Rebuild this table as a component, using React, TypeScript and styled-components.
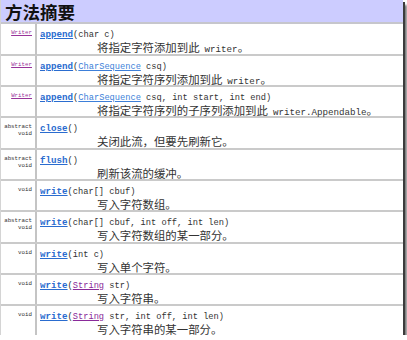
import styled, { createGlobalStyle } from "styled-components";

const GlobalStyle = createGlobalStyle`
  body {
    margin: 0;
    background: #ffffff;
  }
`;

type Part = { text: string; link?: "blue" | "purple" };

type Method = {
  type: string[];
  typeLink?: boolean;
  name: string;
  params: Part[];
  desc: string;
  code?: string;
  tail?: string;
  height: number;
};

const methods: Method[] = [
  { type: ["Writer"], typeLink: true, name: "append", params: [{ text: "(char c)" }], desc: "将指定字符添加到此", code: "writer", tail: "。", height: 32 },
  { type: ["Writer"], typeLink: true, name: "append", params: [{ text: "(" }, { text: "CharSequence", link: "blue" }, { text: " csq)" }], desc: "将指定字符序列添加到此", code: "writer", tail: "。", height: 31 },
  { type: ["Writer"], typeLink: true, name: "append", params: [{ text: "(" }, { text: "CharSequence", link: "blue" }, { text: " csq, int start, int end)" }], desc: "将指定字符序列的子序列添加到此", code: "writer.Appendable", tail: "。", height: 31 },
  { type: ["abstract", "void"], name: "close", params: [{ text: "()" }], desc: "关闭此流，但要先刷新它。", height: 32 },
  { type: ["abstract", "void"], name: "flush", params: [{ text: "()" }], desc: "刷新该流的缓冲。", height: 31 },
  { type: ["void"], name: "write", params: [{ text: "(char[] cbuf)" }], desc: "写入字符数组。", height: 31 },
  { type: ["abstract", "void"], name: "write", params: [{ text: "(char[] cbuf, int off, int len)" }], desc: "写入字符数组的某一部分。", height: 32 },
  { type: ["void"], name: "write", params: [{ text: "(int c)" }], desc: "写入单个字符。", height: 31 },
  { type: ["void"], name: "write", params: [{ text: "(" }, { text: "String", link: "purple" }, { text: " str)" }], desc: "写入字符串。", height: 31 },
  { type: ["void"], name: "write", params: [{ text: "(" }, { text: "String", link: "purple" }, { text: " str, int off, int len)" }], desc: "写入字符串的某一部分。", height: 32 },
];

const Frame = styled.div`
  width: 403px;
  height: 335px;
  overflow: hidden;
  background: #ffffff;
  border-left: 1px solid #d4d4d4;
  box-sizing: border-box;
  box-shadow: 2px 2px 0 #3c3c3c, 4px 5px 2px #7a7a7a;
`;

const Header = styled.div`
  height: 24px;
  box-sizing: border-box;
  background: #ccccff;
  border-bottom: 2px solid #c6c6cc;
  padding: 1px 0 0 4px;
  font-family: "Noto Sans CJK SC", sans-serif;
  font-weight: 700;
  font-size: 17.5px;
  line-height: 21px;
  color: #111111;
`;

const Row = styled.div<{ $h: number }>`
  display: grid;
  grid-template-columns: 36px 1fr;
  height: ${(p) => p.$h}px;
  box-sizing: border-box;
  border-bottom: 2px solid #cacaca;
`;

const TypeCell = styled.div`
  border-right: 2px solid #c4c4c4;
  padding: 5px 3px 0 0;
  text-align: right;
  font-family: "Liberation Mono", monospace;
  font-size: 5.8px;
  line-height: 7px;
  color: #333333;
`;

const TypeLink = styled.span`
  color: #993399;
  text-decoration: underline;
`;

const DetailCell = styled.div`
  padding: 4px 0 0 3px;
  color: #333333;
`;

const Signature = styled.div`
  font-family: "Liberation Mono", monospace;
  font-size: 8.7px;
  line-height: 13px;
  white-space: nowrap;
`;

const Name = styled.span`
  font-weight: 700;
  font-size: 9.2px;
  color: #2a6ccf;
  text-decoration: underline;
`;

const ParamLink = styled.span<{ $tone: "blue" | "purple" }>`
  color: ${(p) => (p.$tone === "blue" ? "#3d7fd9" : "#8a2a9a")};
  text-decoration: underline;
`;

const Desc = styled.div`
  padding-left: 57px;
  font-family: "Noto Sans CJK SC", sans-serif;
  font-size: 11.4px;
  line-height: 11px;
  white-space: nowrap;
`;

const Code = styled.span`
  margin-left: 5px;
  font-family: "Liberation Mono", monospace;
  font-size: 9.2px;
`;

export default function App() {
  return (
    <>
      <GlobalStyle />
      <Frame>
        <Header>方法摘要</Header>
        {methods.map((m, i) => (
          <Row key={i} $h={m.height}>
            <TypeCell>
              {m.type.map((t) => (
                <div key={t}>{m.typeLink ? <TypeLink>{t}</TypeLink> : t}</div>
              ))}
            </TypeCell>
            <DetailCell>
              <Signature>
                <Name>{m.name}</Name>
                {m.params.map((p, j) =>
                  p.link ? (
                    <ParamLink key={j} $tone={p.link}>
                      {p.text}
                    </ParamLink>
                  ) : (
                    <span key={j}>{p.text}</span>
                  )
                )}
              </Signature>
              <Desc>
                {m.desc}
                {m.code && <Code>{m.code}</Code>}
                {m.tail}
              </Desc>
            </DetailCell>
          </Row>
        ))}
      </Frame>
    </>
  );
}
